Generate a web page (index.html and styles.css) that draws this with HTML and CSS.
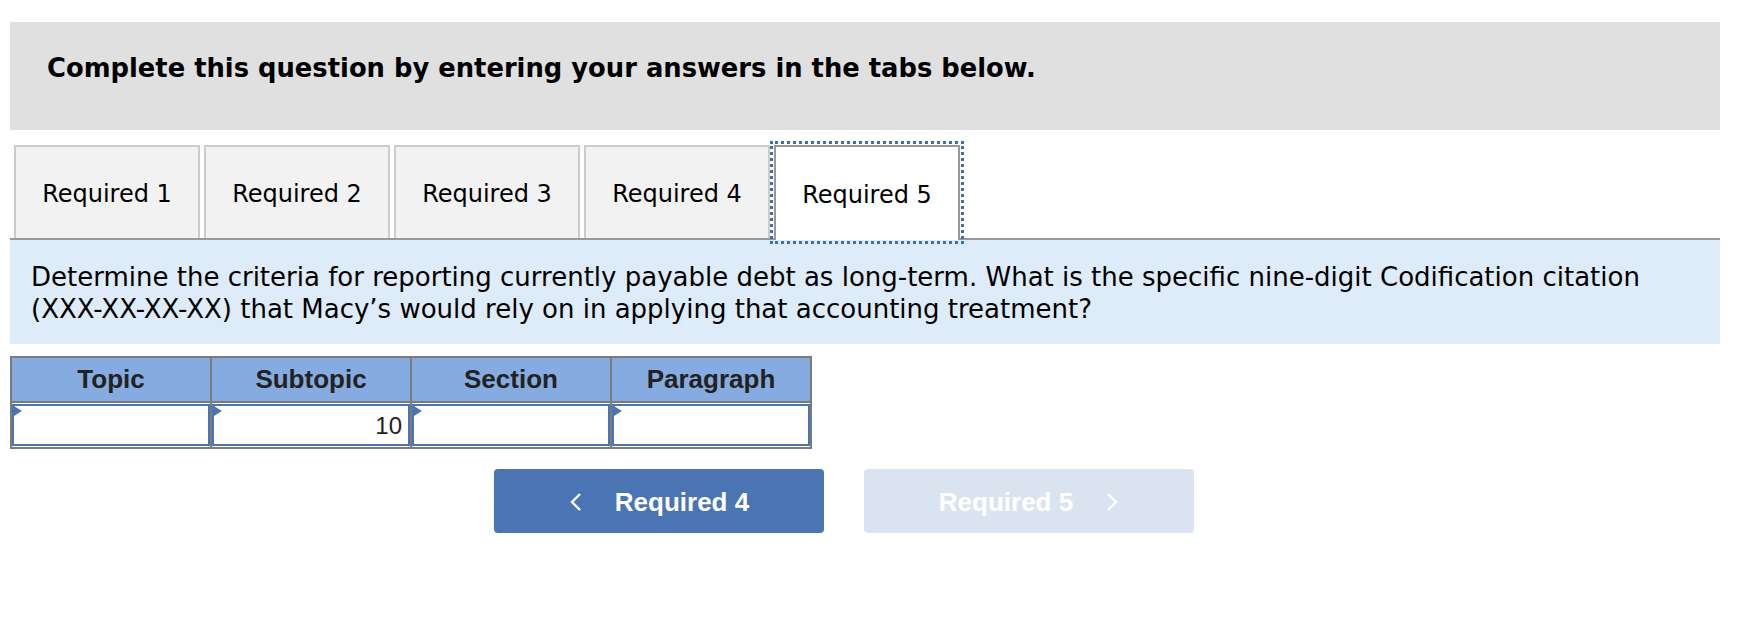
FILE: index.html
```html
<!DOCTYPE html>
<html lang="en">

<head>
    <meta charset="UTF-8">
    <meta name="viewport" content="width=device-width, initial-scale=1.0">
    <title>Required 5</title>
    <link rel="stylesheet" href="styles.css">
</head>

<body>
    <main class="page">
        <div class="instructions">
            <h2>Complete this question by entering your answers in the tabs below.</h2>
        </div>

        <div class="tabs">
            <button class="tab">Required 1</button>
            <button class="tab">Required 2</button>
            <button class="tab">Required 3</button>
            <button class="tab">Required 4</button>
            <button class="tab tab-active">Required 5</button>
        </div>

        <div class="question">
            <p>Determine the criteria for reporting currently payable debt as long-term. What is the specific nine-digit Codification citation (XXX-XX-XX-XX) that Macy’s would rely on in applying that accounting treatment?</p>
        </div>

        <table class="citation">
            <thead>
                <tr>
                    <th>Topic</th>
                    <th>Subtopic</th>
                    <th>Section</th>
                    <th>Paragraph</th>
                </tr>
            </thead>
            <tbody>
                <tr>
                    <td><div class="cell"><input type="text" value=""></div></td>
                    <td><div class="cell"><input type="text" value="10"></div></td>
                    <td><div class="cell"><input type="text" value=""></div></td>
                    <td><div class="cell"><input type="text" value=""></div></td>
                </tr>
            </tbody>
        </table>

        <div class="nav">
            <button class="nav-btn nav-prev">
                <svg width="14" height="20" viewBox="0 0 14 20"><polyline points="11,2 3,10 11,18" fill="none" stroke="currentColor" stroke-width="2.4"/></svg>
                <span>Required 4</span>
            </button>
            <button class="nav-btn nav-next" disabled>
                <span>Required 5</span>
                <svg width="14" height="20" viewBox="0 0 14 20"><polyline points="3,2 11,10 3,18" fill="none" stroke="currentColor" stroke-width="2.4"/></svg>
            </button>
        </div>
    </main>
</body>

</html>
```

FILE: styles.css
```css
:root {
    --blue: #4a74b4;
    --gray-line: #999999;
    --text: #000000;
}

* {
    margin: 0;
    padding: 0;
    box-sizing: border-box;
}

body {
    font-family: 'DejaVu Sans', Verdana, sans-serif;
    font-size: 24px;
    color: var(--text);
    background-color: #ffffff;
}

.page {
    width: 1720px;
    padding: 22px 0 0 10px;
}

.instructions {
    height: 108px;
    padding: 31px 37px 0;
    background-color: #e0e0e0;
}

.instructions h2 {
    font-size: 25.8px;
    font-weight: 700;
    line-height: 1.2;
}

.tabs {
    display: flex;
    gap: 4px;
    margin-top: 15px;
    padding-left: 4px;
    border-bottom: 2px solid var(--gray-line);
}

.tab {
    width: 186px;
    height: 93px;
    padding-top: 2px;
    font-family: inherit;
    font-size: 24px;
    color: var(--text);
    background-color: #f2f2f2;
    border: 2px solid #cccccc;
    border-bottom: none;
    cursor: pointer;
}

.tab-active {
    height: 95px;
    margin-bottom: -2px;
    background-color: #ffffff;
    border-color: var(--gray-line);
    outline: 3px dotted #3f6cb2;
    outline-offset: 1px;
}

.question {
    height: 104px;
    padding: 21px 21px 0;
    background-color: #deebf8;
}

.question p {
    font-size: 26px;
    line-height: 32px;
}

.citation {
    width: 802px;
    margin-top: 12px;
    border-collapse: collapse;
    table-layout: fixed;
    font-family: 'Liberation Sans', Arial, sans-serif;
}

.citation th,
.citation td {
    border: 2px solid #7b7b7b;
}

.citation th {
    height: 45px;
    font-size: 26px;
    font-weight: 700;
    color: #222222;
    background-color: #85abe0;
}

.citation td {
    height: 46px;
    padding: 0;
}

.cell {
    position: relative;
    height: 42px;
}

.cell::before {
    content: '';
    position: absolute;
    top: 2px;
    left: 2px;
    border-top: 5px solid transparent;
    border-bottom: 5px solid transparent;
    border-left: 8px solid var(--blue);
}

.cell input {
    display: block;
    width: 100%;
    height: 100%;
    padding: 2px 6px 0;
    border: 2px solid var(--blue);
    font-family: 'Liberation Sans', Arial, sans-serif;
    font-size: 24px;
    text-align: right;
    color: #222222;
    outline: none;
}

.nav {
    display: flex;
    gap: 40px;
    margin-top: 20px;
    padding-left: 484px;
}

.nav-btn {
    display: flex;
    align-items: center;
    justify-content: center;
    gap: 32px;
    width: 330px;
    height: 64px;
    padding-top: 2px;
    border: none;
    border-radius: 4px;
    font-family: 'Liberation Sans', Arial, sans-serif;
    font-size: 26px;
    font-weight: 700;
    color: #ffffff;
    cursor: pointer;
}

.nav-prev {
    background-color: var(--blue);
}

.nav-next {
    background-color: #dae4f0;
    cursor: default;
}
```
